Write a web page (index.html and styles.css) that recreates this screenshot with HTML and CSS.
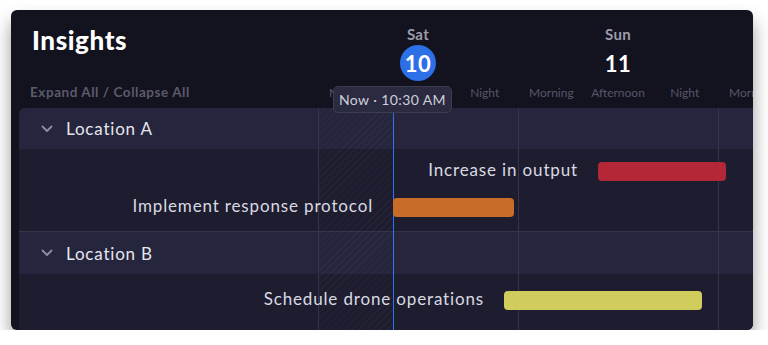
FILE: index.html
```html
<!DOCTYPE html>
<html>
<head>
    <title>Insights</title>
    <link rel="stylesheet" href="styles.css">
</head>
<body>
    <div class="card">
        <div class="head">
            <div class="head-left">
                <h1>Insights</h1>
                <a class="toggle-all">Expand All / Collapse All</a>
            </div>
            <div class="days">
                <div class="day">
                    <div class="day-name">Sat</div>
                    <div class="day-num today">10</div>
                    <div class="slots"><span>Morning</span><span>Afternoon</span><span>Night</span></div>
                </div>
                <div class="day">
                    <div class="day-name">Sun</div>
                    <div class="day-num">11</div>
                    <div class="slots"><span>Morning</span><span>Afternoon</span><span>Night</span></div>
                </div>
                <!-- next day only peeks in at the edge -->
                <div class="day">
                    <div class="day-name"></div>
                    <div class="day-num"></div>
                    <div class="slots"><span>Morning</span><span></span><span></span></div>
                </div>
            </div>
        </div>

        <div class="now-tip">Now &middot; 10:30 AM</div>

        <div class="panel">
            <!-- grid overlay: day lines, past hatch, now marker -->
            <div class="past"></div>
            <div class="grid">
                <div class="grid-day"></div>
                <div class="grid-day"></div>
                <div class="grid-day"></div>
            </div>
            <div class="now-line"></div>

            <div class="group">
                <div class="group-head">
                    <svg class="chevron" width="12" height="8" viewBox="0 0 12 8"><polyline points="1.5,1.5 6,6 10.5,1.5" fill="none" stroke="#8c8ca2" stroke-width="1.8" stroke-linecap="round" stroke-linejoin="round"/></svg>
                    Location A
                </div>
                <div class="tasks">
                    <div class="task">
                        <div class="task-label" style="width:579px">Increase in output</div>
                        <div class="bar red" style="width:128px"></div>
                    </div>
                    <div class="task">
                        <div class="task-label" style="width:374px">Implement response protocol</div>
                        <div class="bar orange" style="width:121px"></div>
                    </div>
                </div>
            </div>

            <div class="group">
                <div class="group-head">
                    <svg class="chevron" width="12" height="8" viewBox="0 0 12 8"><polyline points="1.5,1.5 6,6 10.5,1.5" fill="none" stroke="#8c8ca2" stroke-width="1.8" stroke-linecap="round" stroke-linejoin="round"/></svg>
                    Location B
                </div>
                <div class="tasks">
                    <div class="task">
                        <div class="task-label" style="width:485px">Schedule drone operations</div>
                        <div class="bar yellow" style="width:198px"></div>
                    </div>
                </div>
            </div>
        </div>
    </div>
</body>
</html>
```

FILE: styles.css
```css
body {
    margin: 0;
    background: #ffffff;
    font-family: Lato, "Open Sans", sans-serif;
}

.card {
    position: relative;
    margin: 10px 0 0 11px;
    width: 742px;
    height: 320px;
    background: #13121f;
    border-radius: 6px;
    overflow: hidden;
    box-shadow: 0 11px 18px rgba(0, 0, 0, 0.4);
}

.head {
    display: flex;
    height: 98px;
}

.head-left {
    width: 286px;
    padding-left: 21px;
    flex-shrink: 0;
}

h1 {
    margin: 0;
    padding-top: 15px;
    font-size: 26px;
    line-height: 30px;
    font-weight: 900;
    letter-spacing: 0.6px;
    color: #ffffff;
}

.toggle-all {
    display: block;
    margin-top: 29px;
    margin-left: -2px;
    font-size: 13.5px;
    line-height: 16px;
    font-weight: 700;
    letter-spacing: 0.55px;
    color: #5b5b6c;
    cursor: pointer;
}

.days {
    display: flex;
}

.day {
    width: 200px;
    flex-shrink: 0;
    display: flex;
    flex-direction: column;
    align-items: center;
}

.day-name {
    margin-top: 15px;
    height: 18px;
    font-size: 15px;
    line-height: 18px;
    font-weight: 700;
    letter-spacing: 0.3px;
    color: #9c9cab;
}

.day-num {
    margin-top: 2px;
    width: 36px;
    height: 36px;
    border-radius: 50%;
    display: flex;
    align-items: center;
    justify-content: center;
    font-size: 22px;
    font-weight: 700;
    letter-spacing: 0.5px;
    color: #ffffff;
}

.day-num.today {
    background: #2c6fe6;
}

.slots {
    margin-top: 5px;
    width: 100%;
    display: flex;
}

.slots span {
    flex: 1;
    text-align: center;
    font-size: 12px;
    line-height: 14px;
    color: #56566a;
}

.now-tip {
    position: absolute;
    left: 322px;
    top: 76px;
    z-index: 5;
    padding: 0 5px;
    height: 25px;
    line-height: 25px;
    font-size: 14px;
    letter-spacing: 0.4px;
    color: #cfcfda;
    background: #2a2a40;
    border: 1px solid #3b3b52;
    border-radius: 5px;
}

.panel {
    position: relative;
    margin-left: 8px;
    height: 222px;
    background: #1d1d2f;
    border-top-left-radius: 6px;
    overflow: hidden;
}

.past {
    position: absolute;
    left: 299px;
    top: 0;
    bottom: 0;
    width: 75px;
    z-index: 1;
    background: repeating-linear-gradient(135deg, rgba(255, 255, 255, 0.03) 0 1px, transparent 1px 5px);
}

.grid {
    position: absolute;
    left: 299px;
    top: 0;
    bottom: 0;
    z-index: 1;
    display: flex;
}

.grid-day {
    box-sizing: border-box;
    width: 200px;
    border-left: 1px solid #34344a;
}

.now-line {
    position: absolute;
    left: 374px;
    top: 0;
    bottom: 0;
    width: 1px;
    z-index: 2;
    background: #2f74ee;
}

.group + .group {
    border-top: 1px solid #34344a;
}

.group-head {
    display: flex;
    align-items: center;
    height: 41px;
    padding-left: 22px;
    background: #25253d;
    font-size: 17px;
    letter-spacing: 0.8px;
    color: #e6e6ee;
}

.group + .group .group-head {
    height: 42px;
}

.chevron {
    margin-right: 13px;
}

.tasks {
    position: relative;
    z-index: 3;
    padding: 4px 0 6px;
}

.group + .group .tasks {
    padding-top: 8px;
}

.task {
    display: flex;
    align-items: center;
    height: 36px;
}

.task-label {
    flex-shrink: 0;
    box-sizing: border-box;
    margin-bottom: 4px;
    padding-right: 20px;
    text-align: right;
    font-size: 17px;
    letter-spacing: 0.85px;
    color: #d9d9e2;
    white-space: nowrap;
}

.bar {
    height: 19px;
    border-radius: 4px;
}

.bar.red {
    background: #b32736;
}

.bar.orange {
    background: #c86d29;
}

.bar.yellow {
    background: #d1cd5c;
}
```
